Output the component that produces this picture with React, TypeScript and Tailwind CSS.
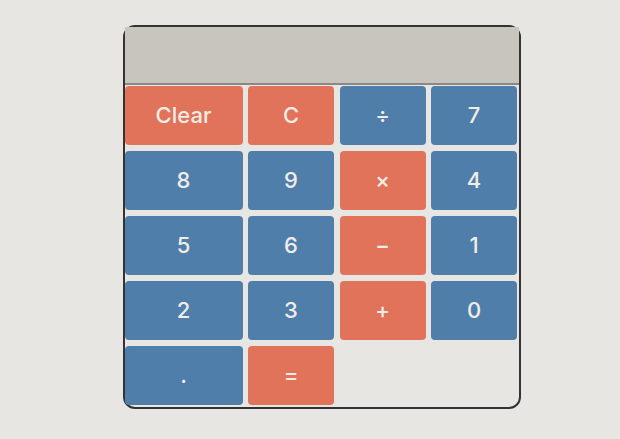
import React from 'react'

// 버튼 데이터: 라벨과 색상 종류
type Key = { label: string; kind: 'op' | 'num' }

const KEYS: Key[] = [
  { label: 'Clear', kind: 'op' },
  { label: 'C', kind: 'op' },
  { label: '÷', kind: 'num' },
  { label: '7', kind: 'num' },
  { label: '8', kind: 'num' },
  { label: '9', kind: 'num' },
  { label: '×', kind: 'op' },
  { label: '4', kind: 'num' },
  { label: '5', kind: 'num' },
  { label: '6', kind: 'num' },
  { label: '−', kind: 'op' },
  { label: '1', kind: 'num' },
  { label: '2', kind: 'num' },
  { label: '3', kind: 'num' },
  { label: '+', kind: 'op' },
  { label: '0', kind: 'num' },
  { label: '.', kind: 'num' },
  { label: '=', kind: 'op' },
]

export default function App() {
  return (
    <div
      className="min-h-screen bg-[#e8e6e2] pl-[123px] pt-[25px]"
      style={{ fontFamily: 'Inter, "Liberation Sans", sans-serif' }}
    >
      <div className="h-[384px] w-[398px] rounded-xl border-2 border-[#333333]">
        {/* 디스플레이 */}
        <div className="h-[58px] border-b-2 border-[#8a8884] bg-[#c8c5be]" />

        {/* 버튼 그리드 */}
        <div className="-ml-[0.5px] mt-[0.5px] grid grid-cols-[118px_86px_86px_86px] gap-[5.5px]">
          {KEYS.map((k) => (
            <button
              key={k.label}
              className={`flex h-[59.5px] items-center justify-center rounded-[4px] text-[22px] font-medium text-[#f1ede6] ${
                k.kind === 'op' ? 'bg-[#e0735a]' : 'bg-[#4f7eaa]'
              }`}
            >
              {k.label}
            </button>
          ))}
        </div>
      </div>
    </div>
  )
}
